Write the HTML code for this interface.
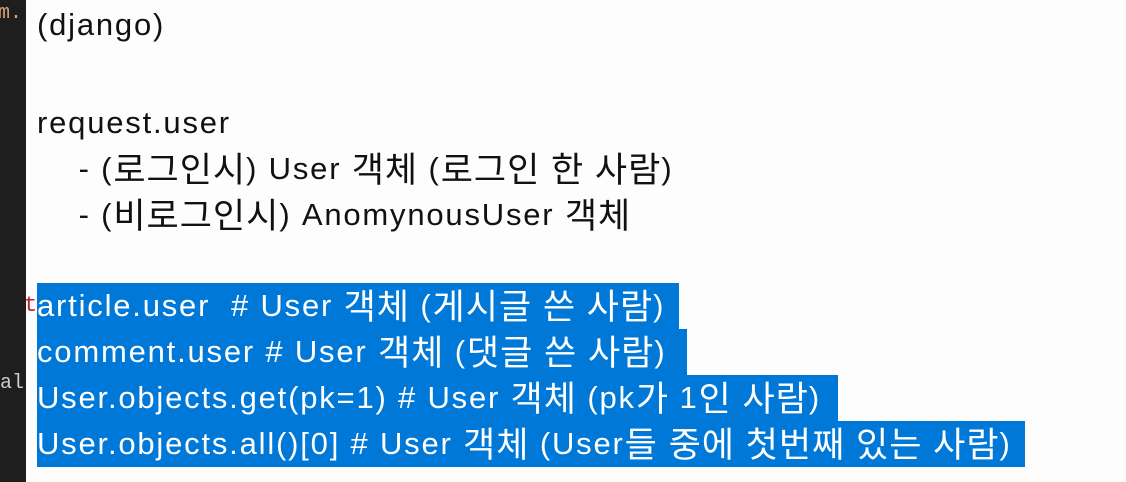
<!DOCTYPE html>
<html><head><meta charset="utf-8"><style>
body{margin:0;width:1126px;height:482px;background:#fdfdfd;overflow:hidden;position:relative;font-family:"Liberation Sans","Noto Sans CJK KR",sans-serif;}
.side{position:absolute;left:0;top:0;width:26px;height:482px;background:#1e1e1e;font-family:"Liberation Mono",monospace;font-size:20px;}
.l{position:absolute;left:37px;font-size:31px;letter-spacing:1.8px;line-height:46px;color:#111;white-space:pre;height:46px;}
.k{font-size:35px;letter-spacing:1px;line-height:30px;position:relative;top:3px;}
.h{background:#0078d7;color:#fff;}
</style></head><body>
<div class="side">
<div style="position:absolute;left:-2px;top:2px;color:#d7a07a">m.</div>
<div style="position:absolute;left:24px;top:293px;color:#c0202a;font-size:22px">t</div>
<div style="position:absolute;left:0;top:372px;color:#ccc">al</div>
</div>
<div class="l" style="top:2px">(django)</div>
<div class="l" style="top:100px">request.user</div>
<div class="l" style="top:146px">    - (<span class="k">로그인시</span>) User <span class="k">객체</span> (<span class="k">로그인 한 사람</span>)</div>
<div class="l" style="top:192px">    - (<span class="k">비로그인시</span>) AnomynousUser <span class="k">객체</span></div>
<div class="l h" style="top:283px;width:642px">article.user  # User <span class="k">객체</span> (<span class="k">게시글 쓴 사람</span>)</div>
<div class="l h" style="top:329px;width:650px">comment.user # User <span class="k">객체</span> (<span class="k">댓글 쓴 사람</span>)</div>
<div class="l h" style="top:375px;width:801px">User.objects.get(pk=1) # User <span class="k">객체</span> (pk<span class="k">가</span> 1<span class="k">인 사람</span>)</div>
<div class="l h" style="top:421px;width:988px">User.objects.all()[0] # User <span class="k">객체</span> (User<span class="k">들 중에 첫번째 있는 사람</span>)</div>
</body></html>
